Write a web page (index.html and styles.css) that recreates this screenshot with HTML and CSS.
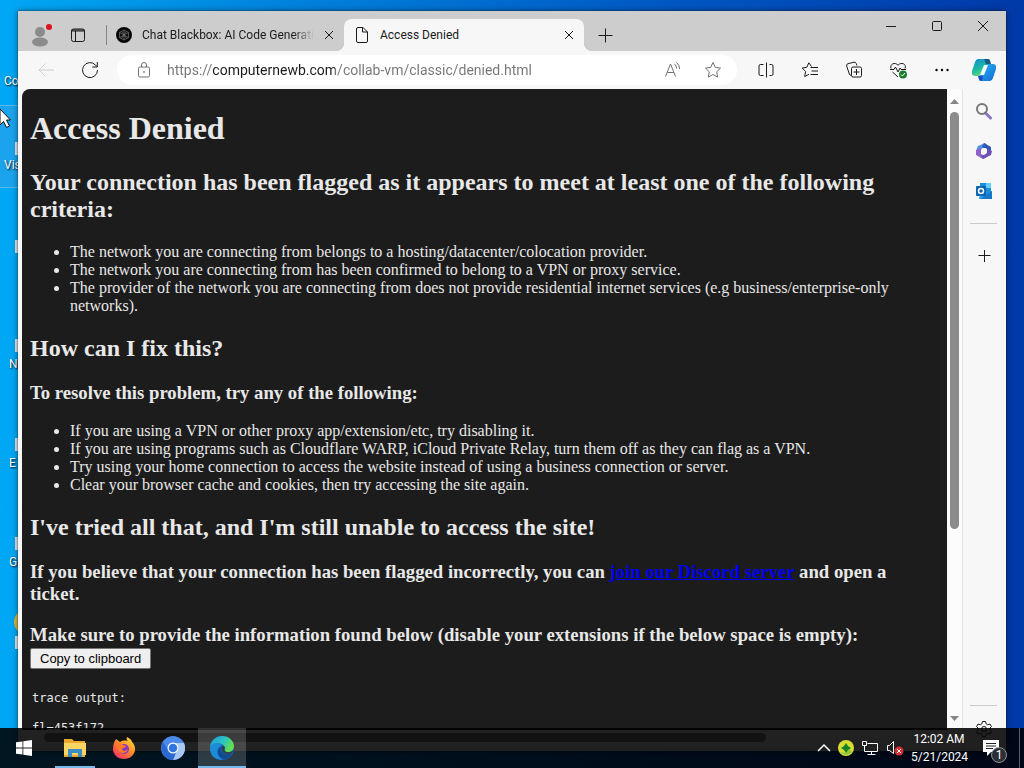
FILE: index.html
```html
<!DOCTYPE html>
<html lang="en">
<head>
    <meta charset="UTF-8">
    <meta name="viewport" content="width=device-width, initial-scale=1.0">
    <title>Access Denied</title>
    <link rel="stylesheet" href="styles.css">
</head>
<body>
    <div class="desktop">
        <div class="shortcuts">
            <div class="shortcut">Co</div>
            <div class="shortcut selected"><i></i>Vis</div>
            <div class="shortcut"><i></i></div>
            <div class="shortcut right"><i></i>N</div>
            <div class="shortcut right"><i></i>E</div>
            <div class="shortcut right"><i></i>G</div>
            <div class="shortcut"><b></b><i></i></div>
        </div>

        <div class="window">
            <div class="titlebar">
                <button class="profile" aria-label="Profile">
                    <svg width="22" height="24" viewBox="0 0 22 24"><circle cx="9" cy="9" r="5" fill="#8b8b8b"/><ellipse cx="9" cy="19" rx="8" ry="4.500" fill="#8b8b8b"/><circle cx="18" cy="4" r="3" fill="#d9141e"/></svg>
                </button>
                <button class="workspace" aria-label="Tab actions">
                    <svg class="line" width="16" height="16" viewBox="0 0 16 16"><rect x="1.500" y="2" width="13" height="12.500" rx="2"/><path d="M1.500 4h13M1.500 3h13M5.500 4v10"/></svg>
                </button>
                <div class="tab">
                    <svg width="16" height="16" viewBox="0 0 16 16"><circle cx="8" cy="8" r="8" fill="#080808"/><path d="M8 3l4.500 2.500v5L8 13l-4.500-2.500v-5zM3.500 5.500l9 5M12.500 5.500l-9 5M8 3v10M5.500 4.500l5 7M10.500 4.500l-5 7" fill="none" stroke="#777" stroke-width=".7"/></svg>
                    <span class="tab-title fade">Chat Blackbox: AI Code Generation</span>
                    <button class="tab-close" aria-label="Close tab"><svg class="line" width="10" height="10" viewBox="0 0 10 10"><path d="M1 1l8 8M9 1L1 9"/></svg></button>
                </div>
                <div class="tab active">
                    <svg class="line" width="16" height="18" viewBox="0 0 16 18"><path d="M4 1.500h5l4.500 4.500v9a1.500 1.500 0 0 1-1.500 1.500H4A1.500 1.500 0 0 1 2.500 15V3A1.500 1.500 0 0 1 4 1.500zM8.500 1.500V6h5"/></svg>
                    <span class="tab-title">Access Denied</span>
                    <button class="tab-close" aria-label="Close tab"><svg class="line" width="10" height="10" viewBox="0 0 10 10"><path d="M1 1l8 8M9 1L1 9"/></svg></button>
                </div>
                <button class="new-tab" aria-label="New tab"><svg class="line" width="16" height="16" viewBox="0 0 16 16"><path d="M8.500 1.500v14M1.500 8.500h14"/></svg></button>
                <div class="window-controls">
                    <button aria-label="Minimize"><svg class="line" width="12" height="12" viewBox="0 0 12 12"><path d="M1 6.500h10"/></svg></button>
                    <button aria-label="Maximize"><svg class="line" width="12" height="12" viewBox="0 0 12 12"><rect x="1.500" y="1.500" width="9" height="9" rx="1"/></svg></button>
                    <button aria-label="Close"><svg class="line" width="12" height="12" viewBox="0 0 12 12"><path d="M1 1l10 10M11 1L1 11"/></svg></button>
                </div>
            </div>

            <div class="toolbar">
                <div class="nav">
                    <button aria-label="Back"><svg class="line disabled" width="18" height="16" viewBox="0 0 18 16"><path d="M17 8H2M8.500 1.500L2 8l6.500 6.500"/></svg></button>
                    <button aria-label="Refresh"><svg class="line" width="18" height="18" viewBox="0 0 18 18"><path d="M16.500 9A7.500 7.500 0 1 1 14.500 4L16 5.500M16.300 1v5h-5"/></svg></button>
                </div>
                <div class="address">
                    <svg class="line grey" width="14" height="18" viewBox="0 0 14 18"><rect x="1.500" y="6" width="11" height="10" rx="1.500"/><path d="M4.500 6V4a2.500 2.500 0 0 1 5 0v2"/><circle cx="7" cy="11" r=".5"/></svg>
                    <input type="text" aria-label="Address" value="https://computernewb.com/collab-vm/classic/denied.html">
                    <button aria-label="Read aloud"><svg class="line grey" width="18" height="18" viewBox="0 0 18 18"><path d="M1.500 15.500L6.500 3l5 12.500M3.200 11.500h6.600M10.500 3a5 5 0 0 1 2 4.500M12.500 1.500a7.500 7.500 0 0 1 3 6.500"/></svg></button>
                    <button aria-label="Favorite"><svg class="line grey" width="18" height="18" viewBox="0 0 18 18"><path d="M9 1.500l2.300 4.900 5.200.7-3.800 3.700 1 5.300L9 13.500l-4.700 2.600 1-5.300L1.500 7.100l5.200-.7z"/></svg></button>
                </div>
                <div class="tools">
                    <button aria-label="Split screen"><svg class="line" width="18" height="18" viewBox="0 0 18 18"><path d="M6.500 3.500h-3a1.500 1.500 0 0 0-1.500 1.500v8a1.500 1.500 0 0 0 1.500 1.500h3M12.500 3.500h2A1.500 1.500 0 0 1 16 5v8a1.500 1.500 0 0 1-1.500 1.500h-2M9.500 1.500v15"/></svg></button>
                    <button aria-label="Favorites"><svg class="line" width="18" height="18" viewBox="0 0 18 18"><path d="M10.500 5.500L7.800 1.800 5.800 6.300l-4.600.7 3.400 3.500-.9 5 4.300-2.200M9.500 6.500H17M10.500 10H17M9.500 13.500H17"/></svg></button>
                    <button aria-label="Collections"><svg class="line" width="18" height="18" viewBox="0 0 18 18"><path d="M6.500 14.500L5 14a3 3 0 0 1-1-2M4 12L1.700 5.200A2 2 0 0 1 3 2.700l6-1.500a2 2 0 0 1 2.200 1.300l.7 2M8 6h7a1.500 1.500 0 0 1 1.500 1.500v7A1.500 1.500 0 0 1 15 16H8a1.500 1.500 0 0 1-1.500-1.500v-7A1.500 1.500 0 0 1 8 6zM11.500 8v6M8.500 11h6"/></svg></button>
                    <button aria-label="Browser essentials"><svg class="line" width="18" height="18" viewBox="0 0 18 18"><path d="M2 7.500C.5 3 6 .5 9 4.300 12 .5 18 3 16 7.500M1 8.500h4L6.500 6 9 11l2-4 1 1.500h5M3.500 11L9 16"/><circle cx="14" cy="13.500" r="4" fill="#1b7d2b" stroke="none"/><path d="M12 13.500l1.500 1.500 2.500-3" stroke="#fff"/></svg></button>
                    <button aria-label="Settings and more"><svg width="18" height="18" viewBox="0 0 18 18"><circle cx="3.500" cy="9" r="1.200"/><circle cx="9" cy="9" r="1.200"/><circle cx="14.500" cy="9" r="1.200"/></svg></button>
                </div>
                <button class="copilot" aria-label="Copilot">
                    <svg width="24" height="24" viewBox="0 0 24 24">
                        <defs><linearGradient id="cp1" x2=".4" y2="1"><stop stop-color="#1588d0"/><stop offset=".6" stop-color="#19b9a4"/><stop offset="1" stop-color="#62d879"/></linearGradient><linearGradient id="cp2" x2="1" y2="1"><stop stop-color="#24b8ef"/><stop offset="1" stop-color="#1468d8"/></linearGradient></defs>
                        <path d="M6 1h10q2 0 2 3l-5 11q-1 3-4 3H3q-4 0-3-5l3-9q1-3 3-3z" fill="url(#cp1)"/>
                        <path d="M18 23H9q-3 0-2-4l5-10q1-3 4-3h5q4 0 3 5l-3 9q-1 3-3 3z" fill="url(#cp2)"/>
                        <path d="M12 1h4q2 0 3 5h-5z" fill="#155b87"/><path d="M6 18h5l-1 5q-3 0-4-5z" fill="#2046c9"/><path d="M12 7h4l-4 10H8z" fill="#f4fbff"/>
                    </svg>
                </button>
            </div>

            <div class="main">
                <div class="view">
                    <div class="page">
                        <h1>Access Denied</h1>
                        <h2>Your connection has been flagged as it appears to meet at least one of the following criteria:</h2>
                        <ul>
                            <li>The network you are connecting from belongs to a hosting/datacenter/colocation provider.</li>
                            <li>The network you are connecting from has been confirmed to belong to a VPN or proxy service.</li>
                            <li>The provider of the network you are connecting from does not provide residential internet services (e.g business/enterprise-only networks).</li>
                        </ul>
                        <h2>How can I fix this?</h2>
                        <h3>To resolve this problem, try any of the following:</h3>
                        <ul>
                            <li>If you are using a VPN or other proxy app/extension/etc, try disabling it.</li>
                            <li>If you are using programs such as Cloudflare WARP, iCloud Private Relay, turn them off as they can flag as a VPN.</li>
                            <li>Try using your home connection to access the website instead of using a business connection or server.</li>
                            <li>Clear your browser cache and cookies, then try accessing the site again.</li>
                        </ul>
                        <h2>I've tried all that, and I'm still unable to access the site!</h2>
                        <h3>If you believe that your connection has been flagged incorrectly, you can <a href="#">join our Discord server</a> and open a ticket.</h3>
                        <h3>Make sure to provide the information found below (disable your extensions if the below space is empty):<br><button class="copy">Copy to clipboard</button></h3>
                        <pre>trace output:

fl=453f172</pre>
                    </div>
                    <div class="hscroll"><div class="hthumb"></div></div>
                </div>
                <div class="vscroll">
                    <svg width="9" height="6" viewBox="0 0 9 6"><path d="M0 6l4.500-5L9 6z" fill="#858585"/></svg>
                    <div class="vtrack"><div class="vthumb"></div></div>
                    <svg width="9" height="6" viewBox="0 0 9 6"><path d="M0 0l4.500 5L9 0z" fill="#858585"/></svg>
                </div>
                <div class="sidebar">
                    <button aria-label="Search"><svg width="18" height="18" viewBox="0 0 18 18" fill="none"><path d="M10.500 11l5 5" stroke="#8a74c8" stroke-width="3" stroke-linecap="round"/><circle cx="7" cy="7" r="5" stroke="#777" stroke-width="2"/></svg></button>
                    <button aria-label="Microsoft 365"><svg width="18" height="18" viewBox="0 0 18 18"><path d="M10 1L3 4 1 9l4 4 2-6 7-2z" fill="#4b94e0"/><path d="M9 1l7 4v7l-4 2V7L7 5z" fill="#3557b7"/><path d="M1 8v5l7 4 4-2-6-3V6z" fill="#8d63c9"/><path d="M8 17l8-4 1-4-4-2-2 5-5 2z" fill="#7050b8"/><circle cx="9" cy="9" r="3" fill="#f7f7f7"/></svg></button>
                    <button aria-label="Outlook"><svg width="18" height="18" viewBox="0 0 18 18"><path d="M5 1h11v16H5z" fill="#1a8fdb"/><path d="M11 1h5v5h-5z" fill="#66cdf5"/><path d="M5 10l6 3 6-4v8H4z" fill="#28a8ea"/><path d="M5 17l12-8v8z" fill="#1477c8"/><rect x="1" y="4" width="10" height="10" rx="1" fill="#0864b1"/><circle cx="6" cy="9" r="2.500" fill="none" stroke="#fff" stroke-width="1.500"/></svg></button>
                    <hr>
                    <button aria-label="Customize"><svg class="line" width="14" height="14" viewBox="0 0 14 14"><path d="M7.500 1v12M1.500 6.500h12"/></svg></button>
                    <hr class="bottom">
                    <button class="gear" aria-label="Settings"><svg class="line" width="18" height="18" viewBox="0 0 18 18"><path d="M7.500 1.500h3l.6 2.300 1.600.9 2.300-.6 1.500 2.500-1.700 1.600v1.700l1.700 1.600-1.500 2.500-2.300-.6-1.600.9-.6 2.300h-3l-.6-2.300-1.600-.9-2.300.6-1.500-2.500 1.700-1.600V8.200L1.500 6.600 3 4.100l2.300.6 1.600-.9z"/><circle cx="9" cy="9" r="2.500"/></svg></button>
                </div>
            </div>
        </div>

        <svg class="cursor" width="14" height="22" viewBox="0 0 14 22"><path d="M0 1l10.500 11H6.500l3 6-3 1.500-3-6L0 17z" fill="#fff" stroke="#111"/></svg>

        <div class="taskbar">
            <button class="task" aria-label="Start"><svg width="16" height="16" viewBox="0 0 16 16" fill="#fff"><path d="M0 2.300l6.500-.9v6.200H0zM7.300 1.300L16 0v7.600H7.300zM0 8.400h6.500v6.200L0 13.700zM7.300 8.400H16V16l-8.700-1.300z"/></svg></button>
            <button class="task open" aria-label="File Explorer"><svg width="24" height="24" viewBox="0 0 24 24"><path d="M1 3h8l2 2h11v16H1z" fill="#e8a92c"/><path d="M1 7h22v12H1z" fill="#fcd463"/><path d="M5 13h14v8h-4v-4H9v4H5z" fill="#3b8dc4"/></svg></button>
            <button class="task" aria-label="Firefox"><svg width="24" height="24" viewBox="0 0 24 24"><defs><linearGradient id="ff" x1="1" x2=".2" y2="1"><stop stop-color="#fff13d"/><stop offset=".45" stop-color="#ff9627"/><stop offset="1" stop-color="#f52e63"/></linearGradient></defs><path d="M15 1c-1 2 0 3 1 4-4-1-7 0-8 1L4 3C2 6 1 9 1 13c0 6 5 10 11 10s11-4 11-10c0-3-1-5-3-7 0-2-3-4-5-5z" fill="url(#ff)"/><circle cx="12" cy="13" r="5" fill="#8b35c5"/><path d="M5 8c3-1 5 0 6 1l3 1c-1 2-4 2-4 3 1 3 4 2 6 0-1 5-9 6-11-1z" fill="#ff7b27"/></svg></button>
            <button class="task" aria-label="Chromium"><svg width="24" height="24" viewBox="0 0 24 24"><circle cx="12" cy="12" r="12" fill="#4b8aeb"/><path d="M12 7h11a12 12 0 0 1-11 17l4-10z" fill="#a9c7f5"/><path d="M2 6a12 12 0 0 0 10 18l4-10-8 1z" fill="#2b68cf"/><circle cx="12" cy="12" r="5.500" fill="#fff"/><circle cx="12" cy="12" r="4.300" fill="#2f75df"/></svg></button>
            <button class="task current" aria-label="Edge"><svg width="24" height="24" viewBox="0 0 24 24"><defs><linearGradient id="e1" x2="1" y2=".4"><stop stop-color="#2397d8"/><stop offset=".6" stop-color="#2cc3c4"/><stop offset="1" stop-color="#62df4b"/></linearGradient></defs><circle cx="12" cy="12" r="12" fill="#1466b4"/><path d="M0 11C1 4 6 0 12 0c7 0 12 5 12 10 0 4-3 6-6 6-4 0-4-2-3-4C15 8 6 4 0 11z" fill="url(#e1)"/><path d="M0 11c4-5 11-5 12-1-7 1-6 10 2 13C5 26-1 18 0 11z" fill="#1c8bd8"/><path d="M12 10c-4 5 2 11 10 7-2 4-6 7-10 6-6-4-5-10 0-13z" fill="#124a91"/><path d="M12 10c2 0 3 1 3 2-2 3 2 5 5 4l3-1-1 2c-6 3-12-1-10-7z" fill="#373f46"/></svg></button>
            <div class="tray">
                <svg width="14" height="10" viewBox="0 0 14 10"><path d="M1 8l6-6 6 6" fill="none" stroke="#fff" stroke-width="1.500"/></svg>
                <svg width="16" height="16" viewBox="0 0 16 16"><circle cx="8" cy="8" r="8" fill="#d7dd35"/><path d="M2 12a8 8 0 0 0 12 0l-3-3-3 4z" fill="#8dc63f"/><path d="M8 3l2 3 3 2-3 2-2 3-2-3-3-2 3-2z" fill="#168326"/></svg>
                <svg width="18" height="16" viewBox="0 0 18 16"><path d="M6.500 3.500h10v8h-13V6M1.500 1.500h4v4h-4zM10.500 12v2.500M6.500 14.500h8" fill="none" stroke="#fff"/></svg>
                <svg width="18" height="16" viewBox="0 0 18 16"><path d="M1.500 5.500h2l4-4v12l-4-3h-2z" fill="none" stroke="#fff"/><circle cx="13" cy="11" r="4.500" fill="#d32f35"/><path d="M11 9l4 4M15 9l-4 4" stroke="#fff"/></svg>
                <div class="clock">12:02 AM<br>5/21/2024</div>
                <button class="notify" aria-label="Notifications"><svg width="16" height="16" viewBox="0 0 16 16"><path d="M0 0h16v12H8l-4 4v-4H0z" fill="#fff"/><path d="M3 3.500h10M3 6h10M3 8.500h7" stroke="#222"/></svg><span class="badge">1</span></button>
            </div>
        </div>
    </div>
</body>
</html>
```
FILE: styles.css
```css
* {
    box-sizing: border-box;
}

body {
    margin: 0;
    font-family: Roboto, "Noto Sans", sans-serif;
    font-size: 12px;
    color: #1b1b1b;
}

button {
    border: none;
    padding: 0;
    background: none;
    font-family: inherit;
}

svg {
    display: block;
    flex-shrink: 0;
}

.line {
    fill: none;
    stroke: #1b1b1b;
}

.line.grey {
    stroke: #707070;
}

.line.disabled {
    stroke: #cfcfcf;
}

.desktop {
    position: relative;
    height: 100vh;
    overflow: hidden;
    background: linear-gradient(90deg, #00a8f5 0%, #0087e0 25%, #0058c4 65%, #0039a8 100%);
}

/* desktop shortcuts */
.shortcuts {
    display: flex;
    flex-direction: column;
    padding-top: 6px;
}

.shortcut {
    position: relative;
    width: 18px;
    height: 83px;
    padding: 0 0 14px 4px;
    margin-bottom: 16px;
    display: flex;
    align-items: flex-end;
    overflow: hidden;
    line-height: 16px;
    color: #fff;
    text-shadow: 1px 1px 2px #000;
}

.shortcut:first-child {
    padding-bottom: 0;
}

.shortcut.selected {
    border: 1px solid #58b7ef;
    border-width: 1px 0;
    background: #1ba3ee;
}

.shortcut.right {
    padding-left: 9px;
}

.shortcut i {
    position: absolute;
    right: 0;
    top: 36px;
    width: 3px;
    height: 13px;
    background: #dfe8f0;
}

.shortcut b {
    position: absolute;
    left: 14px;
    top: 10px;
    width: 24px;
    height: 24px;
    border-radius: 50%;
    background: #d6b942;
}

/* browser window */
.window {
    position: absolute;
    top: 11px;
    left: 18px;
    right: 18px;
    bottom: 17px;
    display: flex;
    flex-direction: column;
    background: #f7f7f7;
    box-shadow: 0 0 6px rgba(0, 0, 0, 0.5), 0 0 1px #123;
}

.titlebar {
    display: flex;
    height: 40px;
    flex-shrink: 0;
    align-items: flex-end;
    background: #cdcdcd;
}

.profile,
.workspace {
    height: 32px;
    display: flex;
    align-items: center;
    justify-content: center;
}

.profile {
    width: 48px;
}

.workspace {
    width: 24px;
}

.tab {
    display: flex;
    align-items: center;
    width: 240px;
    height: 32px;
    padding: 0 10px;
    gap: 10px;
}

.tab:not(.active) {
    position: relative;
    margin-left: 16px;
    width: 238px;
}

.tab:not(.active)::before {
    content: "";
    position: absolute;
    left: 0;
    top: 6px;
    height: 20px;
    border-left: 1px solid #858585;
}

.tab.active {
    position: relative;
    border-radius: 8px 8px 0 0;
    background: #f7f7f7;
}

.tab.active::before,
.tab.active::after {
    content: "";
    position: absolute;
    bottom: 0;
    width: 8px;
    height: 8px;
}

.tab.active::before {
    left: -8px;
    background: radial-gradient(circle at 0 0, #cdcdcd 8px, #f7f7f7 8px);
}

.tab.active::after {
    right: -8px;
    background: radial-gradient(circle at 100% 0, #cdcdcd 8px, #f7f7f7 8px);
}

.tab-title {
    flex: 1;
    overflow: hidden;
    white-space: nowrap;
}

.fade {
    -webkit-mask-image: linear-gradient(90deg, #000 88%, transparent);
    mask-image: linear-gradient(90deg, #000 88%, transparent);
}

.new-tab {
    width: 42px;
    height: 32px;
    display: flex;
    align-items: center;
    justify-content: center;
}

.window-controls {
    display: flex;
    align-self: flex-start;
    margin-left: auto;
}

.window-controls button {
    width: 46px;
    height: 30px;
    display: flex;
    align-items: center;
    justify-content: center;
}

.toolbar {
    display: flex;
    flex-shrink: 0;
    align-items: center;
    height: 38px;
}

.nav {
    display: flex;
    width: 99px;
    padding-left: 6px;
}

.nav button,
.tools button {
    width: 44px;
    height: 30px;
    display: flex;
    align-items: center;
    justify-content: center;
}

.address {
    flex: 1;
    display: flex;
    align-items: center;
    height: 30px;
    padding: 0 14px 0 20px;
    border-radius: 15px;
    background: #fff;
}

.address input {
    flex: 1;
    min-width: 0;
    border: none;
    outline: none;
    padding: 0;
    margin-left: 16px;
    font: 14px Roboto, "Noto Sans", sans-serif;
    color: transparent;
    background: linear-gradient(90deg, #757575 46px, #1b1b1b 46px, #1b1b1b 168px, #757575 168px);
    -webkit-background-clip: text;
    background-clip: text;
}

.address button {
    width: 40px;
    display: flex;
    justify-content: center;
}

.address button:last-child {
    width: 20px;
    margin-left: 10px;
}

.tools {
    display: flex;
    margin-left: 7px;
}

.copilot {
    width: 40px;
    margin-right: 2px;
    display: flex;
    justify-content: center;
}

.main {
    flex: 1;
    min-height: 0;
    display: flex;
    padding-left: 4px;
}

.view {
    flex: 1;
    min-width: 0;
    display: flex;
    flex-direction: column;
    padding-bottom: 6px;
}

/* web page */
.page {
    flex: 1;
    min-height: 0;
    overflow: hidden;
    padding: 0 8px;
    border-top-left-radius: 8px;
    background: #1c1c1c;
    color: #e8e8e8;
    font: 16px "Liberation Serif", serif;
}

.page a {
    color: #0000ee;
}

.copy {
    height: 21px;
    margin-top: 2px;
    padding: 0 9px;
    border: 1px solid #767676;
    border-radius: 2px;
    background: #efefef;
    color: #000;
    font: 13px "Liberation Sans", sans-serif;
    vertical-align: top;
}

.page pre {
    margin: 22px 0 0;
    padding: 0 2px;
    font: 12px/15px "DejaVu Sans Mono", monospace;
}

.hscroll {
    height: 15px;
    flex-shrink: 0;
    padding: 3px 22px;
    background: #fcfcfc;
}

.hthumb {
    width: 82%;
    height: 9px;
    border-radius: 5px;
    background: #8b8b8b;
}

.vscroll {
    width: 15px;
    display: flex;
    flex-direction: column;
    align-items: center;
    padding: 9px 0 29px;
    gap: 8px;
    background: #fcfcfc;
}

.vtrack {
    flex: 1;
}

.vthumb {
    width: 9px;
    height: 70%;
    border-radius: 5px;
    background: #8b8b8b;
}

.sidebar {
    width: 44px;
    display: flex;
    flex-direction: column;
    align-items: center;
    padding: 2px 2px 0 0;
    border-left: 1px solid #e3e3e3;
}

.sidebar button {
    width: 40px;
    height: 40px;
    display: flex;
    align-items: center;
    justify-content: center;
}

.sidebar hr {
    width: 27px;
    margin: 12px 0;
    border: none;
    border-top: 1px solid #cbcbcb;
}

.sidebar hr.bottom {
    margin: auto 0 1px;
}

.sidebar .gear {
    height: 44px;
}

.cursor {
    position: absolute;
    left: 0;
    top: 108px;
}

/* taskbar */
.taskbar {
    position: absolute;
    left: 0;
    right: 0;
    bottom: 0;
    height: 40px;
    display: flex;
    gap: 1px;
    background: rgba(0, 0, 0, 0.87);
}

.task {
    position: relative;
    width: 48px;
    height: 40px;
    display: flex;
    align-items: center;
    justify-content: center;
}

.task:first-child {
    margin-right: 2px;
}

.task.current {
    background: rgba(255, 255, 255, 0.18);
}

.task.open::after,
.task.current::after {
    content: "";
    position: absolute;
    left: 4px;
    right: 4px;
    bottom: 0;
    height: 2px;
    background: #76b9ed;
}

.task.current::after {
    left: 0;
    right: 0;
}

.tray {
    display: flex;
    align-items: center;
    gap: 7px;
    margin-left: auto;
    margin-right: 4px;
    border-right: 1px solid #56606a;
}

.clock {
    width: 56px;
    color: #fff;
    line-height: 18px;
    text-align: center;
    white-space: nowrap;
}

.notify {
    position: relative;
    width: 45px;
    height: 40px;
    display: flex;
    align-items: center;
    padding-left: 9px;
}

.badge {
    position: absolute;
    left: 17px;
    top: 19px;
    width: 16px;
    height: 16px;
    border: 1px solid #8c9299;
    border-radius: 50%;
    background: #2c3036;
    color: #fff;
    font-size: 12px;
    line-height: 14px;
    text-align: center;
}
```
